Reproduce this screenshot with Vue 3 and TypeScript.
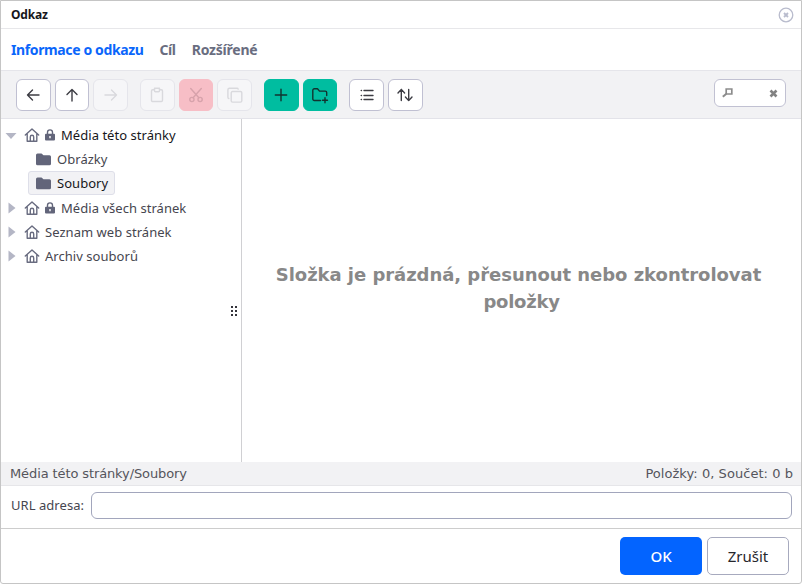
<script setup lang="ts">
import { ref } from 'vue'

interface Tool { name: string; kind: string; paths: string[] }
interface TreeNode { label: string; arrow: 'down' | 'right'; locked: boolean }

const tabs = ['Informace o odkazu', 'Cíl', 'Rozšířené']
const activeTab = ref(0)
const url = ref('')

const groups: Tool[][] = [
  [
    { name: 'back', kind: 'plain', paths: ['M16 10H4.5M9.5 5L4.5 10l5 5'] },
    { name: 'up', kind: 'plain', paths: ['M10 16V4.5M5 9.5L10 4.5l5 5'] },
    { name: 'forward', kind: 'off', paths: ['M4 10h11.5M10.5 5l5 5-5 5'] },
  ],
  [
    { name: 'paste', kind: 'off', paths: ['M7.5 4.7H5.7a1.2 1.2 0 0 0-1.2 1.2v9.4a1.2 1.2 0 0 0 1.2 1.2h8.6a1.2 1.2 0 0 0 1.2-1.2V5.9a1.2 1.2 0 0 0-1.2-1.2h-1.8', 'M7.5 3.3h5v2.4a1 1 0 0 1-1 1h-3a1 1 0 0 1-1-1z'] },
    { name: 'cut', kind: 'danger', paths: ['M4.7 3.5l8.2 9.3M15.3 3.5L7.1 12.8', 'M8 14.5a2.1 2.1 0 1 1-4.2 0 2.1 2.1 0 0 1 4.2 0M16.2 14.5a2.1 2.1 0 1 1-4.2 0 2.1 2.1 0 0 1 4.2 0'] },
    { name: 'copy', kind: 'off', paths: ['M7.5 6.5h8a1.3 1.3 0 0 1 1.3 1.3v8a1.3 1.3 0 0 1-1.3 1.3h-8a1.3 1.3 0 0 1-1.3-1.3v-8a1.3 1.3 0 0 1 1.3-1.3z', 'M3.8 13.5a1.3 1.3 0 0 1-.9-1.3V4.8a1.6 1.6 0 0 1 1.6-1.6h7.4a1.3 1.3 0 0 1 1.3.9'] },
  ],
  [
    { name: 'add', kind: 'green', paths: ['M10 4.3v11.4M4.3 10h11.4'] },
    { name: 'new-folder', kind: 'green', paths: ['M10.5 15.5H4.3a1.5 1.5 0 0 1-1.5-1.5V5.3a1.5 1.5 0 0 1 1.5-1.5h3.2l2 2.3h5.7a1.5 1.5 0 0 1 1.5 1.5v3', 'M15 12.7v5M12.5 15.2h5'] },
  ],
  [
    { name: 'list', kind: 'plain', paths: ['M7 5.5H16M7 10.5H16M7 14.5H16M4.2 5.5h.3M4.2 10.5h.3M4.2 14.5h.3'] },
    { name: 'sort', kind: 'plain', paths: ['M6.3 15.5V4.5M3 8L6.3 4.4 9.6 8', 'M13.7 4.5v11M10.4 12l3.3 3.6 3.3-3.6'] },
  ],
]

const sitePages: TreeNode[] = [{ label: 'Média této stránky', arrow: 'down', locked: true }]
const others: TreeNode[] = [
  { label: 'Média všech stránek', arrow: 'right', locked: true },
  { label: 'Seznam web stránek', arrow: 'right', locked: false },
  { label: 'Archiv souborů', arrow: 'right', locked: false },
]
const folders = ['Obrázky', 'Soubory']
const selected = ref('Soubory')
</script>

<template>
  <div class="dialog">
    <header class="title">
      <span class="title-text">Odkaz</span>
      <svg class="close" viewBox="0 0 16 16"><circle cx="8" cy="8" r="6.8" /><path d="M6 6l4 4M10 6l-4 4" /></svg>
    </header>
    <nav class="tabs">
      <span v-for="(tab, i) in tabs" :key="tab" class="tab" :class="{ active: i === activeTab }" @click="activeTab = i">{{ tab }}</span>
    </nav>
    <div class="toolbar">
      <div v-for="(group, i) in groups" :key="i" class="group">
        <button v-for="tool in group" :key="tool.name" class="tool" :class="tool.kind">
          <svg viewBox="0 0 20 20"><path v-for="d in tool.paths" :key="d" :d="d" /></svg>
        </button>
      </div>
      <div class="search">
        <svg class="lens" viewBox="0 0 12 12"><path class="glass" d="M4.2 2h5.6v5h-5.6z" /><path class="handle" d="M.8 9.8l3.6-3" /></svg>
        <svg class="clear" viewBox="0 0 9 9"><path d="M1.5 1.5l6 6M7.5 1.5l-6 6" /></svg>
      </div>
    </div>
    <main class="body">
      <aside class="tree">
        <template v-for="(list, n) in [sitePages, others]" :key="n">
          <div v-for="node in list" :key="node.label" class="node">
            <svg class="arrow" viewBox="0 0 12 12"><path :d="node.arrow === 'down' ? 'M.5 4h11L6 10z' : 'M3.500 .5l7 5.500-7 5.500z'" /></svg>
            <svg class="home" viewBox="0 0 16 16"><path d="M1.3 8L8 1.9 14.7 8M3.2 6.7v7.5h9.6V6.7M6.3 14.2V9.9A1.7 1.7 0 0 1 9.7 9.9v4.3" /></svg>
            <svg v-if="node.locked" class="lock" viewBox="0 0 10 12"><path class="shackle" d="M2.5 5.5V3.2a2.5 2.3 0 0 1 5 0v2.3" /><path class="case" fill-rule="evenodd" d="M1 4.8h8a1 1 0 0 1 1 1v4.7a1 1 0 0 1-1 1H1a1 1 0 0 1-1-1V5.8a1 1 0 0 1 1-1zM4.3 7.1v2.2h1.4V7.1z" /></svg>
            <span class="label" :class="{ current: n === 0 }">{{ node.label }}</span>
          </div>
          <div v-if="n === 0" class="children">
            <div v-for="folder in folders" :key="folder" class="folder" :class="{ selected: folder === selected }" @click="selected = folder">
              <svg viewBox="0 0 15 13"><path d="M1.5.5h4l2 1.8h6A1.5 1.5 0 0 1 15 3.8v6.9a1.5 1.5 0 0 1-1.5 1.5h-12A1.5 1.5 0 0 1 0 10.7V2A1.5 1.5 0 0 1 1.5.5z" /></svg>
              <span class="label" :class="{ current: folder === selected }">{{ folder }}</span>
            </div>
          </div>
        </template>
        <div class="grip"><i v-for="k in 6" :key="k"></i></div>
      </aside>
      <section class="content"><p>Složka je prázdná, přesunout nebo zkontrolovat <span>položky</span></p></section>
    </main>
    <div class="status"><span class="path">Média této stránky/Soubory</span><span>Položky: 0, Součet: 0 b</span></div>
    <label class="url"><span>URL adresa:</span><input v-model="url" type="text" /></label>
    <footer class="footer">
      <button class="ok">OK</button>
      <button class="cancel">Zrušit</button>
    </footer>
  </div>
</template>

<style scoped>
.dialog {
  box-sizing: border-box; width: 802px; height: 584px; display: flex; flex-direction: column;
  border: 1px solid #c5c5c5; border-radius: 0 0 3px 3px; background: #fff; color: #46464f;
  font-family: "Noto Sans", "Open Sans", sans-serif; font-size: 13px; overflow: hidden;
}
.dialog > * { box-sizing: border-box; flex: none; }
svg { display: block; fill: none; }
button { box-sizing: border-box; padding: 0; margin: 0; font: inherit; }
.title { height: 28px; display: flex; align-items: center; justify-content: space-between; padding: 0 7px 0 10px; border-bottom: 1px solid #e7e7ea; }
.title-text { font-weight: 700; font-size: 12px; letter-spacing: -.15px; color: #17171b; }
.close { width: 16px; height: 16px; stroke: #b9bccd; stroke-width: 1.3; }
.close path { stroke-width: 1.8; }
.tabs { height: 42px; display: flex; align-items: center; gap: 16px; padding-left: 10px; border-bottom: 1px solid #e5e5ea; }
.tab { font-weight: 700; font-size: 14px; letter-spacing: -.38px; color: #696d80; white-space: nowrap; }
.tab:last-child { letter-spacing: -.22px; }
.tab.active { color: #0a66fb; }
.toolbar { height: 48px; display: flex; align-items: center; gap: 12px; padding: 0 15px; border-bottom: 1px solid #e3e3e9; background: #f2f2f4; }
.group { display: flex; gap: 4px; }
.tool { width: 34.67px; height: 32px; display: flex; align-items: center; justify-content: center; border: 1px solid #c0c0d2; border-radius: 6px; background: #fff; }
.tool svg { width: 20px; height: 20px; stroke: #3c3c43; stroke-width: 1.4; stroke-linecap: round; stroke-linejoin: round; }
.tool.off { background: #f6f6f8; border-color: #e5e5eb; }
.tool.off svg { stroke: #d9d9dd; }
.tool.danger { background: #f7bec6; border-color: #f7bec6; }
.tool.danger svg { stroke: #d7a2ab; }
.tool.green { background: #00bda0; border-color: #00bda0; }
.tool.green svg { stroke: #12332f; }
.search { box-sizing: border-box; width: 72px; height: 28px; margin: 0 0 3px auto; display: flex; align-items: center; justify-content: space-between; padding: 0 7px 0 7px; border: 1px solid #c1c1d2; border-radius: 6px; background: #fff; }
.lens { width: 12px; height: 12px; }
.glass { stroke: #8c8c8c; stroke-width: 1.7; }
.handle { stroke: #8c8c8c; stroke-width: 2; }
.clear { width: 9px; height: 9px; stroke: #828282; stroke-width: 2.6; }
.body { height: 343px; display: flex; }
.tree { box-sizing: border-box; position: relative; width: 241px; padding-top: 4px; border-right: 1px solid #d0d0d3; }
.node { height: 24px; display: flex; align-items: center; padding-left: 4px; }
.arrow { width: 12px; height: 12px; margin-right: 7px; fill: #b4b6c5; }
.home { width: 16px; height: 16px; margin-right: 5px; stroke: #696c80; stroke-width: 1.4; stroke-linejoin: round; stroke-linecap: round; }
.lock { width: 10px; height: 12px; margin-right: 6px; }
.shackle { stroke: #62657a; stroke-width: 1.4; }
.case { fill: #62657a; }
.label { letter-spacing: .04px; white-space: nowrap; }
.label.current { color: #17171b; }
.children { display: flex; flex-direction: column; align-items: flex-start; padding: 0 0 1px 27px; }
.folder { box-sizing: border-box; height: 24px; display: flex; align-items: center; gap: 6px; padding: 0 6px 0 7px; border: 1px solid transparent; border-radius: 3px; }
.folder.selected { background: #f2f2f5; border-color: #dedfe9; }
.folder svg { width: 15px; height: 13px; fill: #62657a; }
.grip { position: absolute; left: 230px; top: 187px; display: grid; grid-template-columns: 2px 2px; gap: 2px; }
.grip i { width: 2px; height: 2px; background: #34343b; }
.content { flex: 1; display: flex; align-items: center; justify-content: center; }
.content p { margin: 0 0 5px; width: 500px; padding-right: 6px; text-align: center; font: 700 18px/27px "DejaVu Sans", sans-serif; letter-spacing: -.04px; color: #888; }
.content p span { padding-left: 6px; letter-spacing: -.25px; }
.status { height: 24px; display: flex; align-items: center; justify-content: space-between; padding: 0 8px 0 9px; border-bottom: 1px solid #e6e6e9; background: #f2f2f4; font-family: "DejaVu Sans", sans-serif; font-size: 13px; color: #55555c; letter-spacing: .05px; }
.status .path { letter-spacing: -.11px; }
.url { height: 43px; display: flex; align-items: flex-start; padding: 6px 9px 0 10px; border-bottom: 1px solid #cdcdcd; }
.url span { width: 80px; line-height: 27px; letter-spacing: .05px; white-space: nowrap; }
.url input { box-sizing: border-box; flex: 1; min-width: 0; height: 27px; padding: 0 8px; border: 1px solid #a2a6bc; border-radius: 6px; background: #fff; outline: 0; font: inherit; }
.footer { flex: 1; display: flex; justify-content: flex-end; gap: 5px; padding: 8px 12px 0 0; }
.footer button { width: 82px; height: 38px; border-radius: 5px; font-size: 15px; }
.footer .ok { border: 0; background: #0364ff; color: #fff; font-weight: 500; }
.footer .cancel { border: 1px solid #a7aabe; background: #fff; color: #27272d; }
</style>

<style>
body { background: #fff; }
</style>
